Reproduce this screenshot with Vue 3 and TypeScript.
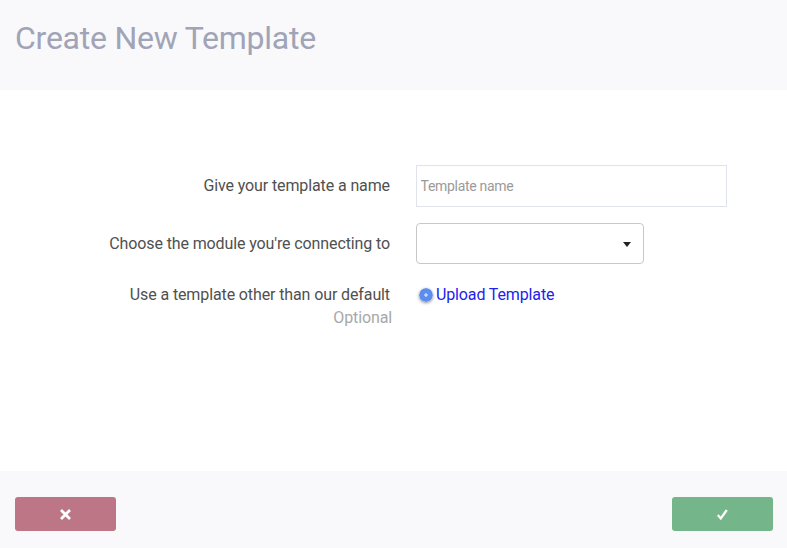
<script setup lang="ts">
const title: string = 'Create New Template'
</script>

<template>
  <div class="page">
    <header class="head"><h1>{{ title }}</h1></header>
    <main class="body">
      <div class="row r1">
        <label class="lab">Give your template a name</label>
        <input class="inp" placeholder="Template name" />
      </div>
      <div class="row r2">
        <label class="lab">Choose the module you're connecting to</label>
        <div class="sel"><span class="caret"></span></div>
      </div>
      <div class="row r3">
        <div class="lab2">
          <div class="lab">Use a template other than our default</div>
          <div class="opt">Optional</div>
        </div>
        <a class="up">
          <svg class="plus" width="14" height="14" viewBox="0 0 14 14"><circle cx="7" cy="7" r="7" fill="#5b8def" /><path d="M7 5v4M5 7h4" stroke="#e6edfc" stroke-width="1.1" /></svg>
          <span>Upload Template</span>
        </a>
      </div>
    </main>
    <footer class="foot">
      <button class="btn no">
        <svg width="13" height="13" viewBox="0 0 13 13"><path d="M2 2l9 9M11 2l-9 9" stroke="#fff" stroke-width="2.8" /></svg>
      </button>
      <button class="btn yes">
        <svg width="13" height="13" viewBox="0 0 13 13"><path d="M1.8 7l3 3.4 6-8.4" fill="none" stroke="#fff" stroke-width="2.3" /></svg>
      </button>
    </footer>
  </div>
</template>

<style scoped>
.page { width: 787px; height: 548px; display: flex; flex-direction: column; font-family: Roboto, sans-serif; background: #fff; overflow: hidden; }
.head { height: 90px; background: #f9f9fb; padding: 0 15px; box-sizing: border-box; flex: none; }
h1 { margin: 0; font-size: 32px; font-weight: 400; line-height: 76px; color: #a0a4b6; letter-spacing: -0.24px; }
.body { flex: 1; padding-top: 75px; box-sizing: border-box; }
.row { display: flex; align-items: center; }
.lab { width: 390px; text-align: right; font-size: 16px; color: #505050; line-height: 20px; letter-spacing: -0.115px; }
.inp { margin-left: 26px; width: 311px; height: 42px; box-sizing: border-box; border: 1px solid #e0e2ec; padding: 0 3.5px; font: 14px Roboto, sans-serif; letter-spacing: -0.3px; outline: none; }
.inp::placeholder { color: #9a9a9a; opacity: 1; }
.r2 { margin-top: 16px; }
.sel { margin-left: 26px; width: 228px; height: 41px; box-sizing: border-box; border: 1px solid #c8c8c8; border-radius: 4px; display: flex; align-items: center; justify-content: flex-end; padding-right: 12px; }
.caret { border: 4px solid transparent; border-top: 5px solid #222; border-bottom: 0; margin-top: 1px; }
.r3 { margin-top: 21px; align-items: flex-start; }
.lab2 { width: 392px; text-align: right; }
.lab2 .lab { width: 390px; }
.opt { font-size: 16px; line-height: 20px; margin-top: 3px; color: #a8a8a8; letter-spacing: -0.13px; }
.up { margin-left: 27px; display: flex; align-items: center; gap: 3px; color: #2222ee; font-size: 16px; line-height: 20px; letter-spacing: -0.13px; }
.plus { border-radius: 50%; box-shadow: 0 1px 3px rgba(0, 0, 0, 0.45); }
.foot { height: 77px; background: #f9f9fb; flex: none; display: flex; justify-content: space-between; padding: 26px 14px 0 15px; box-sizing: border-box; }
.btn { width: 101px; height: 34px; border: 0; border-radius: 3px; display: flex; align-items: center; justify-content: center; padding: 0; }
.no { background: #bd7686; }
.yes { background: #75b58a; }
</style>
